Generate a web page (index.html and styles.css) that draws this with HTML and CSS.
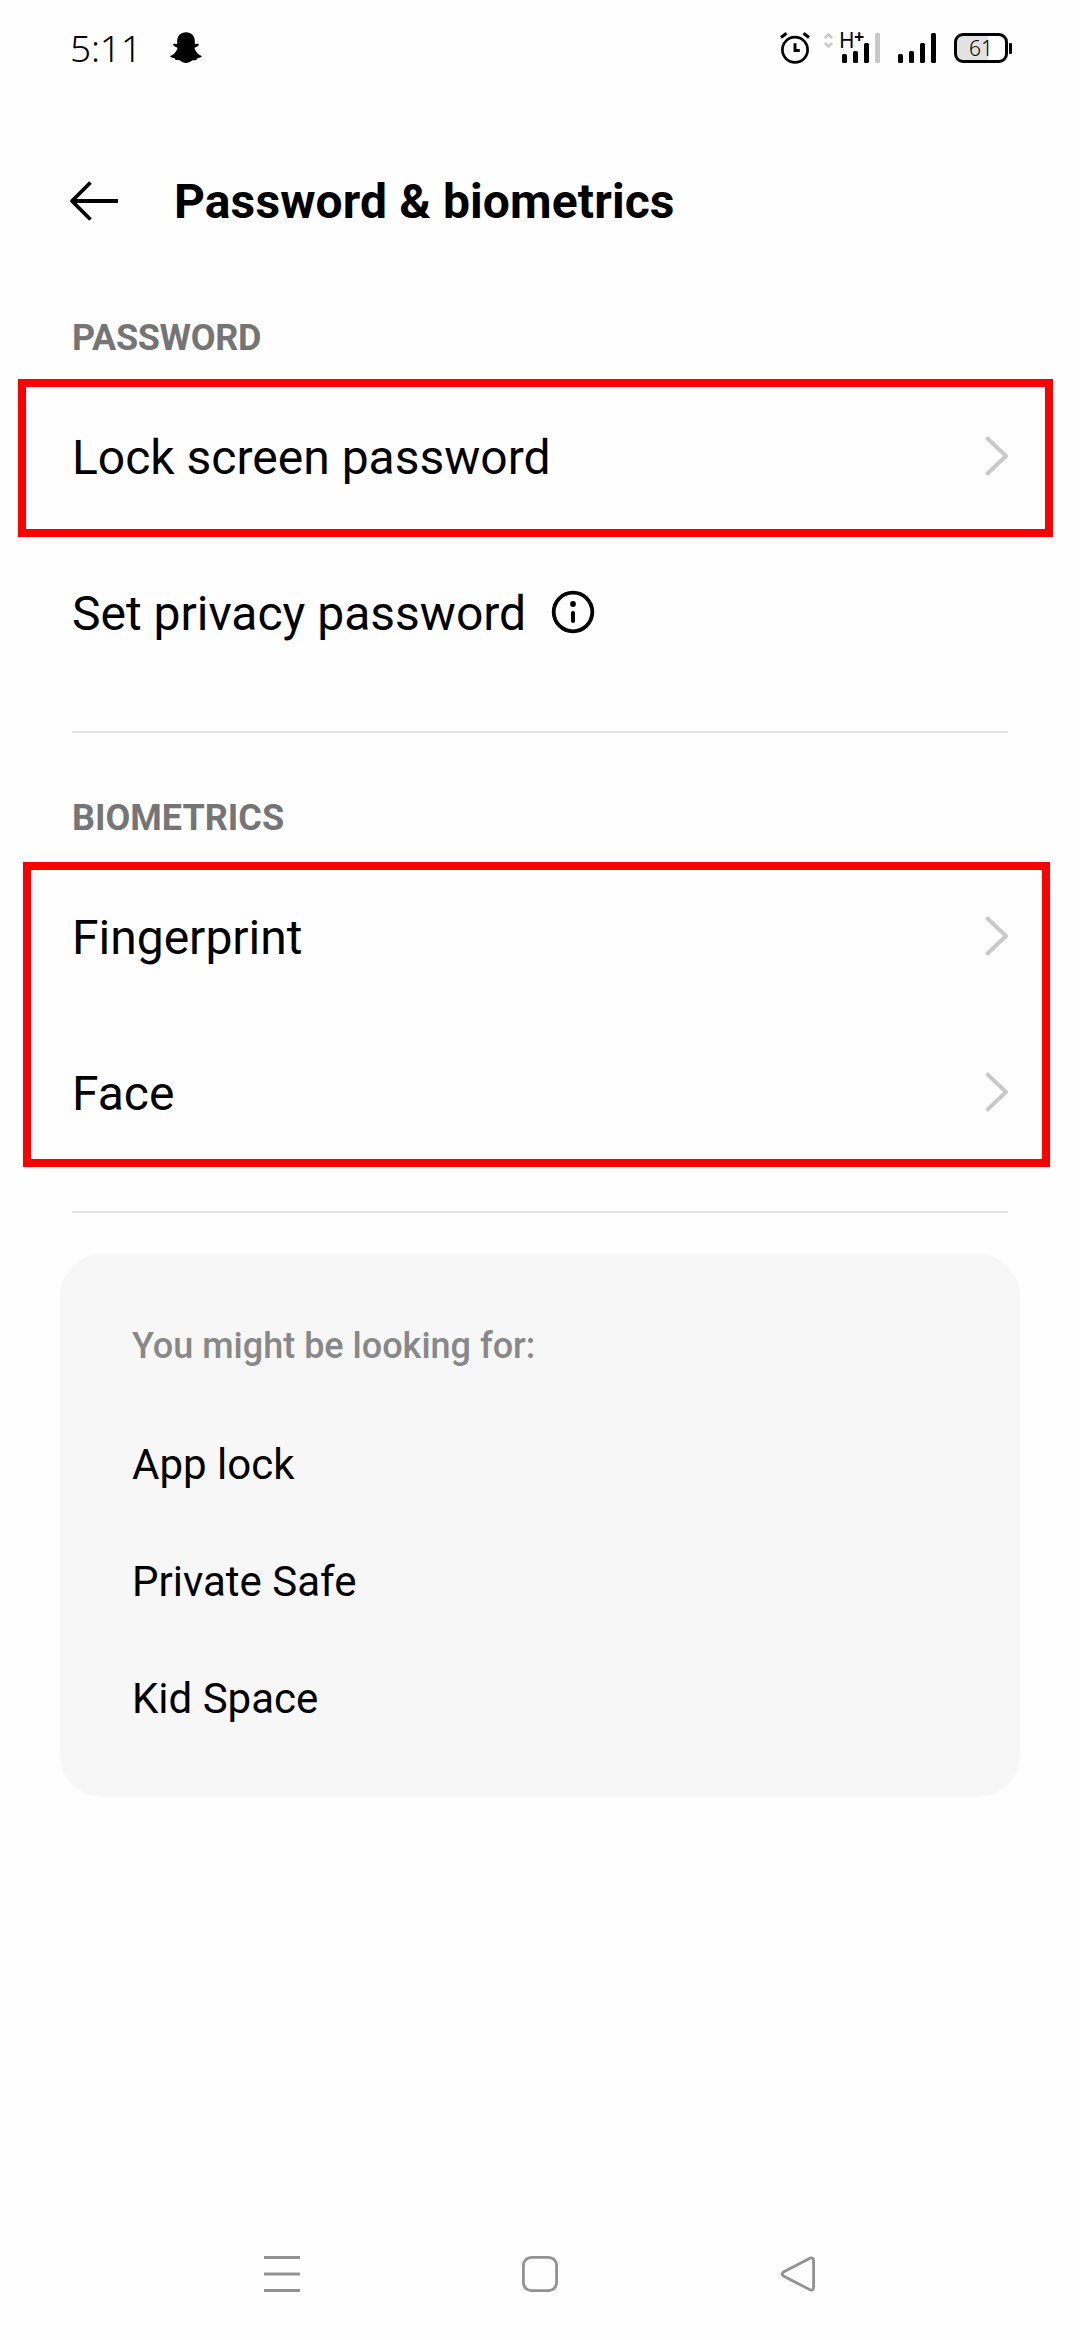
FILE: index.html
```html
<!DOCTYPE html>
<html lang="en">
<head>
<meta charset="utf-8">
<title>Password &amp; biometrics</title>
<link rel="stylesheet" href="styles.css">
</head>
<body>
<div class="screen">
  <div class="status-bar">
    <div class="status-left">
      <span class="clock">5:11</span>
      <svg class="ghost" width="32" height="32" viewBox="0 0 32 32"><path d="M16 .3C10.600.3 7.200 4 7.200 9v2.700C5.900 12.300 4.600 11.300 3.500 12.100c-.9.800 0 2.200 3.100 3.200C7.400 15.600 7.600 16.300 7.200 17.200 5.700 20.400 3.300 23 .3 23.900c-.5.600.4 1.700 4.400 2.400.5.400.4 1.600 1 1.800 1.700.4 3.300-.2 5 .9C12.200 29.900 13.400 31 16 31s3.800-1.100 5.300-2c1.700-1.100 3.300-.5 5-.9.600-.2.500-1.400 1-1.800 4-.7 4.900-1.800 4.400-2.400-3-.9-5.400-3.500-6.900-6.700-.4-.9-.2-1.600.6-1.900 3.100-1 4-2.400 3.100-3.200-1.100-.8-2.400.2-3.700-.4V9C24.800 4 21.400.3 16 .3Z"/></svg>
    </div>
    <div class="status-right">
      <svg class="alarm" width="30" height="32" viewBox="0 0 30 32" fill="none" stroke="#000"><circle cx="15" cy="17.800" r="12.600" stroke-width="2.700"/><path d="M1 5.500 6.500 1.200M29 5.500 23.500 1.200" stroke-width="3"/><path d="M15 11.300v7.200h4.800" stroke-width="2.900"/></svg>
      <svg class="data" width="9" height="32" viewBox="0 0 9 32" fill="none" stroke="#c8c8c8" stroke-width="2.500"><path d="M.8 6 4.500 2.500 8.200 6M.8 11 4.500 14.500 8.200 11"/></svg>
      <div class="mobile-signal">
        <svg width="38" height="32" viewBox="0 0 38 32"><rect y="22" width="5" height="9" rx="1.500"/><rect x="11" y="19" width="5" height="12" rx="1.500"/><rect x="22" y="11" width="5" height="20" rx="1.500"/><rect x="33" y="1" width="5" height="30" rx="1.500" fill="#c8c8c8"/></svg>
        <span class="network">H<b class="plus">+</b></span>
      </div>
      <svg class="signal" width="38" height="32" viewBox="0 0 38 32"><rect y="22" width="5" height="9" rx="1.500"/><rect x="11" y="19" width="5" height="12" rx="1.500"/><rect x="22" y="11" width="5" height="20" rx="1.500"/><rect x="33" y="1" width="5" height="30" rx="1.500"/></svg>
      <div class="battery"><span class="level">61</span></div>
      <span class="battery-tip"></span>
    </div>
  </div>

  <header class="header">
    <svg width="50" height="42" viewBox="0 0 50 42" fill="none" stroke="#000" stroke-width="3.800"><path d="M21.500 2.500 3 21l18.500 18.500M3 21h46" stroke-linejoin="round"/></svg>
    <h1 class="title">Password &amp; biometrics</h1>
  </header>

  <section class="section">
    <h2 class="label">PASSWORD</h2>
    <div class="row"><span class="name">Lock screen password</span><svg class="chevron" width="23" height="40" viewBox="0 0 23 40"><path d="M1.500 1.500 21 20 1.500 38.500"/></svg></div>
    <div class="row"><span class="name">Set privacy password</span>
      <svg class="info" width="44" height="44" viewBox="0 0 44 44"><circle cx="22" cy="22" r="19.300" fill="none" stroke="#000" stroke-width="3.800"/><circle cx="22" cy="14" r="2.900"/><rect x="20" y="21" width="4" height="12" rx="2"/></svg>
    </div>
    <div class="highlight highlight-lock"></div>
  </section>
  <hr class="divider">
  <section class="section">
    <h2 class="label label-wide">BIOMETRICS</h2>
    <div class="row"><span class="name">Fingerprint</span><svg class="chevron" width="23" height="40" viewBox="0 0 23 40"><path d="M1.500 1.500 21 20 1.500 38.500"/></svg></div>
    <div class="row"><span class="name">Face</span><svg class="chevron" width="23" height="40" viewBox="0 0 23 40"><path d="M1.500 1.500 21 20 1.500 38.500"/></svg></div>
    <div class="highlight highlight-bio"></div>
  </section>
  <hr class="divider">

  <section class="card">
    <h2 class="card-title">You might be looking for:</h2>
    <div class="card-item">App lock</div>
    <div class="card-item">Private Safe</div>
    <div class="card-item">Kid Space</div>
  </section>

  <nav class="nav">
    <svg width="36" height="36" viewBox="0 0 36 36"><path d="M0 1.500h36M0 18h36M0 34.500h36" stroke-width="3"/></svg>
    <svg width="36" height="36" viewBox="0 0 36 36"><rect x="1.400" y="1.400" width="33.200" height="33.200" rx="8"/></svg>
    <svg width="36" height="36" viewBox="0 0 36 36"><path d="M30 2.200 3.500 16Q.7 18 3.500 20L30 33.800Q33.600 35 33.600 31V5Q33.600 1 30 2.200Z"/></svg>
  </nav>
</div>
</body>
</html>
```
FILE: styles.css
```css
* { box-sizing: border-box; }
body {
  margin: 0;
  background: #fefefe;
  color: #000;
  font-family: Roboto, "Liberation Sans", sans-serif;
}
h1, h2 { margin: 0; }
svg { display: block; flex: none; }
.screen {
  width: 1080px;
  height: 2340px;
  display: flex;
  flex-direction: column;
  overflow: hidden;
}

.status-bar {
  height: 96px;
  padding: 0 68px 0 70px;
  display: flex;
  align-items: center;
  justify-content: space-between;
}
.status-left, .status-right { display: flex; align-items: center; }
.clock {
  width: 100px;
  font: 300 37px/40px "Noto Sans", sans-serif;
  letter-spacing: -0.2px;
}
.data { margin-left: 14px; }
.mobile-signal { position: relative; margin-left: 9px; }
.network {
  position: absolute;
  left: -3px;
  top: -4px;
  font: 400 21px/24px "Noto Sans", sans-serif;
}
.plus { position: absolute; left: 15px; top: -4px; font-size: 18px; }
.signal { margin-left: 18px; }
.battery {
  width: 54px;
  height: 30px;
  margin-left: 18px;
  border: 3px solid #000;
  border-radius: 9px;
  background: linear-gradient(90deg, #e2e2e2 31px, transparent 31px);
  display: flex;
  align-items: center;
  justify-content: center;
}
.level { font: 300 21px/24px "Noto Sans", sans-serif; }
.battery-tip { width: 3px; height: 11px; margin-left: 1px; border-radius: 1px; background: #000; }

.header {
  height: 210px;
  padding-left: 69px;
  display: flex;
  align-items: center;
  gap: 55px;
}
.title { padding-top: 2px; font-size: 48px; font-weight: 700; line-height: 60px; letter-spacing: 0.12px; }

.section { position: relative; padding: 0 72px; }
.label {
  height: 72px;
  font-size: 36px;
  font-weight: 700;
  line-height: 64px;
  letter-spacing: -0.3px;
  color: #757575;
}
.label-wide { letter-spacing: 0; }
.row { height: 156px; display: flex; align-items: center; }
.name { font-size: 48px; line-height: 60px; padding-top: 4px; }
.chevron { margin-left: auto; fill: none; stroke: #c9c9c9; stroke-width: 4; stroke-linejoin: round; }
.info { margin-left: 25px; }
.highlight { position: absolute; border: 8px solid #f00; }
.highlight-lock { left: 18px; right: 27px; top: 73px; height: 158px; }
.highlight-bio { left: 23px; right: 30px; top: 76px; height: 305px; }

.divider {
  width: 936px;
  height: 2px;
  margin: 41px 72px 53px;
  border: 0;
  background: #e2e2e2;
}
.card {
  width: 960px;
  height: 543px;
  margin: -12px 60px 0;
  padding: 49px 72px 40px;
  border-radius: 42px;
  background: #f7f7f7;
}
.card-title {
  margin-bottom: 17px;
  font-size: 36px;
  font-weight: 500;
  line-height: 86px;
  color: #888;
}
.card-item { font-size: 42px; line-height: 117px; }

.nav {
  margin-top: auto;
  height: 132px;
  padding-left: 264px;
  display: flex;
  align-items: center;
  gap: 222px;
  fill: none;
  stroke: #929292;
  stroke-width: 2.8;
}
```
